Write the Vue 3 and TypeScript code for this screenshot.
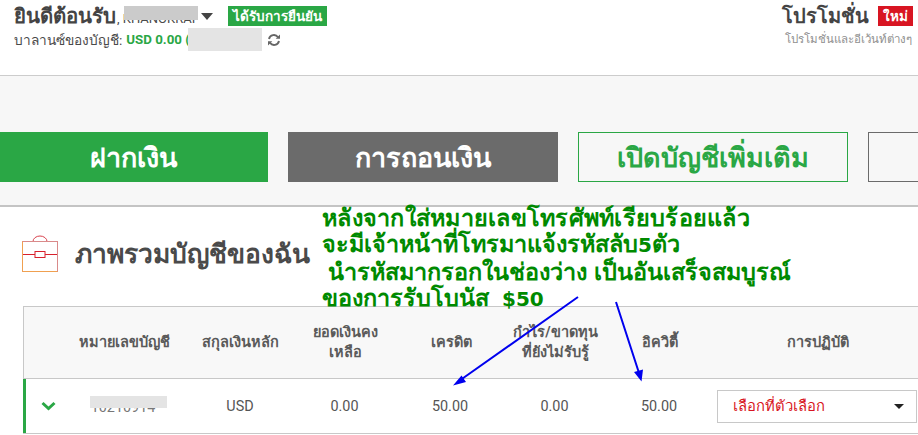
<script setup lang="ts">
const actions = [
  { label: 'ฝากเงิน', kind: 'deposit' },
  { label: 'การถอนเงิน', kind: 'withdraw' },
  { label: 'เปิดบัญชีเพิ่มเติม', kind: 'open' },
  { label: '', kind: 'blank' },
]
const columns = ['', 'หมายเลขบัญชี', 'สกุลเงินหลัก', 'ยอดเงินคง\nเหลือ', 'เครดิต', 'กำไร/ขาดทุน\nที่ยังไม่รับรู้', 'อิควิตี้', 'การปฏิบัติ']
</script>

<template>
  <div class="page">
    <header class="top">
      <div class="welcome">
        <div class="line1">
          <strong class="hello">ยินดีต้อนรับ</strong>
          <span class="name">, KHANOKRAI</span>
          <i class="caret"></i>
          <span class="verified">ได้รับการยืนยัน</span>
        </div>
        <div class="line2">
          <span>บาลานซ์ของบัญชี:</span><b>USD 0.00 (</b>
          <svg class="refresh" viewBox="0 0 14 12" width="14" height="12">
            <path d="M2 5a5 5 0 0 1 9-1.8M12 7a5 5 0 0 1-9 1.8" fill="none" stroke="#666" stroke-width="1.9" />
            <path d="M13 0.5v4.3H8.7zM1 11.5V7.2h4.3z" fill="#666" />
          </svg>
        </div>
      </div>
      <div class="promo">
        <div class="promo-title"><strong>โปรโมชั่น</strong><span class="new">ใหม่</span></div>
        <div class="promo-sub">โปรโมชั่นและอีเว้นท์ต่างๆ</div>
      </div>
    </header>

    <section class="band">
      <button v-for="a in actions" :key="a.kind" class="action" :class="a.kind">{{ a.label }}</button>
    </section>

    <section class="overview">
      <div class="heading">
        <svg class="case" viewBox="0 0 36 38" width="36" height="38">
          <path d="M11 6.5a7 5.5 0 0 1 14 0" fill="none" stroke="#d9434e" stroke-width="1" />
          <rect x="0.5" y="6.5" width="35" height="30" fill="#fff" stroke="#d98a8a" stroke-width="1" />
          <path d="M0.5 6.5v30h35" fill="none" stroke="#f0a050" stroke-width="1" />
          <path d="M1 19.5h12M23 19.5h12" stroke="#d8202c" stroke-width="1" />
          <rect x="13" y="16.5" width="10" height="6" fill="#fff" stroke="#d8202c" stroke-width="1" />
        </svg>
        <h2>ภาพรวมบัญชีของฉัน</h2>
      </div>

      <div class="table">
        <div class="row head">
          <div v-for="(c, i) in columns" :key="i" class="cell" :class="'c' + i">{{ c }}</div>
        </div>
        <div class="row body">
          <div class="cell c0">
            <svg viewBox="0 0 15 10" width="15" height="10">
              <path d="M1.5 2 7.500 7.500 13.5 2" fill="none" stroke="#2aa745" stroke-width="3" />
            </svg>
          </div>
          <div class="cell c1 acct">10210914</div>
          <div class="cell c2">USD</div>
          <div class="cell c3">0.00</div>
          <div class="cell c4">50.00</div>
          <div class="cell c5">0.00</div>
          <div class="cell c6">50.00</div>
          <div class="cell c7">
            <div class="select"><span>เลือกที่ตัวเลือก</span><i class="caret small"></i></div>
          </div>
        </div>
      </div>
    </section>

    <!-- Redactions and annotations painted over the screenshot -->
    <div class="mask mask-name"></div>
    <div class="mask mask-balance"></div>
    <div class="mask mask-acct"></div>

    <div class="note">
      <div class="first">หลังจากใส่หมายเลขโทรศัพท์เรียบร้อยแล้ว</div>
      <div>จะมีเจ้าหน้าที่โทรมาแจ้งรหัสลับ<span class="lat">5</span>ตัว</div>
      <div>&nbsp;นำรหัสมากรอกในช่องว่าง เป็นอันเสร็จสมบูรณ์</div>
      <div>ของการรับโบนัส&nbsp;&nbsp;<span class="lat">$50</span></div>
    </div>
    <svg class="arrows" width="918" height="435" viewBox="0 0 918 435">
      <path d="M578 297 459 381M616 302 639 373" stroke="#0000ee" stroke-width="2" fill="none" />
      <path d="M453 385.500 461.500 375.500 466 382zM641.500 381.500 634 372 643 369.500z" fill="#0000ee" />
    </svg>
  </div>
</template>

<style scoped>
.page {
  position: relative;
  width: 918px;
  height: 435px;
  overflow: hidden;
  background: #fff;
  color: #4a4a4a;
  font-family: Roboto, "Liberation Sans", "Noto Sans", sans-serif;
}
.top {
  box-sizing: border-box;
  height: 76px;
  border-bottom: 1px solid #ccc;
  padding: 4px 5px 0 14px;
  display: flex;
  justify-content: space-between;
}
.line1 {
  display: flex;
  align-items: center;
  height: 24px;
}
.hello {
  font-size: 20.4px;
  color: #444;
}
.name {
  font-size: 13px;
  margin-left: 1px;
  width: 84px;
  white-space: nowrap;
  overflow: hidden;
  padding-top: 4px;
}
.caret {
  width: 0;
  height: 0;
  border-left: 6px solid transparent;
  border-right: 6px solid transparent;
  border-top: 7px solid #444;
}
.verified {
  margin-left: 15px;
  width: 99px;
  height: 20px;
  line-height: 20px;
  text-align: center;
  background: #2aa745;
  color: #fff;
  font-size: 13.5px;
  font-weight: 700;
}
.line2 {
  margin-top: 2px;
  height: 20px;
  line-height: 20px;
  font-size: 13.7px;
  white-space: nowrap;
  display: flex;
  align-items: center;
  gap: 4px;
}
.line2 b {
  color: #2aa745;
  font-size: 13.3px;
}
.refresh {
  margin-left: 73px;
}
.promo {
  text-align: right;
}
.promo-title {
  display: flex;
  align-items: center;
  justify-content: flex-end;
  gap: 9px;
  height: 24px;
}
.promo-title strong {
  font-size: 20px;
  color: #444;
}
.new {
  width: 35px;
  height: 20px;
  line-height: 20px;
  text-align: center;
  background: #d81522;
  color: #fff;
  font-size: 13.5px;
  font-weight: 700;
}
.promo-sub {
  margin-top: 2px;
  padding-right: 1px;
  font-size: 11.5px;
  color: #8f8f8f;
}
.band {
  box-sizing: border-box;
  height: 131px;
  background: #f7f7f7;
  border-bottom: 2px solid #c4c4c4;
  padding: 56px 0 0;
  margin-left: -2px;
  display: flex;
  gap: 20px;
  width: 1200px;
}
.action {
  box-sizing: border-box;
  flex: 0 0 270px;
  height: 50px;
  font: 700 27px Roboto, "Liberation Sans", "Noto Sans", sans-serif;
  border: 0;
  padding: 0;
}
.deposit {
  background: #2aa745;
  color: #fff;
}
.withdraw {
  background: #6b6b6b;
  color: #fff;
}
.open {
  background: transparent;
  border: 1px solid #2aa745;
  color: #2aa745;
}
.blank {
  background: transparent;
  border: 1px solid #6b6b6b;
}
.overview {
  padding: 0 0 0 23px;
}
.heading {
  height: 99px;
  display: flex;
  align-items: center;
  padding-bottom: 5px;
  box-sizing: border-box;
}
.case {
  display: block;
  margin-left: -1px;
}
.heading h2 {
  margin: 0 0 0 17px;
  font-size: 26.4px;
  font-weight: 700;
  color: #4a4a4a;
}
.table {
  width: 920px;
  border-top: 1px solid #c8c8c8;
  border-bottom: 1px solid #c8c8c8;
}
.row {
  display: grid;
  grid-template-columns: 47px 106px 116px 105px 106px 103px 106px 210px;
  align-items: center;
  text-align: center;
  font-size: 14.4px;
}
.head {
  height: 71px;
  background: #f8f8f8;
  border-left: 1px solid #c8c8c8;
  border-bottom: 1px solid #c8c8c8;
  font-size: 14.5px;
  font-weight: 700;
  color: #5a5a5a;
  line-height: 20px;
  white-space: pre-line;
}
.c2 {
  padding-left: 10px;
}
.body {
  height: 54px;
  border-left: 3px solid #2aa745;
  grid-template-columns: 44px 106px 116px 105px 106px 103px 106px 210px;
  color: #555;
}
.body .c2 {
  padding-left: 12px;
}
.body .c0 svg {
  display: block;
  margin: 0 auto;
}
.acct {
  color: #777;
  padding-top: 3px;
}
.select {
  box-sizing: border-box;
  width: 200px;
  height: 33px;
  margin-left: 5px;
  border: 1px solid #c8c8c8;
  display: flex;
  align-items: center;
  justify-content: space-between;
  padding: 0 12px 0 15px;
  color: #d81522;
  font-size: 14.8px;
}
.caret.small {
  border-left-width: 5px;
  border-right-width: 5px;
  border-top: 5px solid #222;
}
.mask {
  position: absolute;
  background: #e4e4e4;
}
.mask-name {
  left: 124px;
  top: 6px;
  width: 74px;
  height: 14px;
  background: #cbcbcb;
}
.mask-balance {
  left: 188px;
  top: 28px;
  width: 74px;
  height: 23px;
}
.mask-acct {
  left: 90px;
  top: 396px;
  width: 77px;
  height: 12px;
}
.note {
  position: absolute;
  left: 322px;
  top: 205px;
  font-size: 23.4px;
  font-weight: 700;
  line-height: 26.3px;
  color: #008a00;
  white-space: nowrap;
  font-family: "Liberation Sans", "Noto Sans", sans-serif;
}
.note .first {
  letter-spacing: 0.25px;
}
.note .lat {
  font-family: "DejaVu Sans", sans-serif;
  font-size: 20px;
}
.arrows {
  position: absolute;
  left: 0;
  top: 0;
  pointer-events: none;
}
</style>
